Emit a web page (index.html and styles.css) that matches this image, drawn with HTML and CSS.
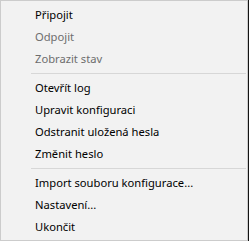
FILE: index.html
```html
<!DOCTYPE html>
<html lang="cs">
<head>
<meta charset="utf-8">
<link rel="stylesheet" href="styles.css">
</head>
<body>
<div class="menu">
  <div class="item">Připojit</div>
  <div class="item disabled">Odpojit</div>
  <div class="item disabled">Zobrazit stav</div>
  <div class="sep"></div>
  <div class="item">Otevřít log</div>
  <div class="item">Upravit konfiguraci</div>
  <div class="item">Odstranit uložená hesla</div>
  <div class="item">Změnit heslo</div>
  <div class="sep"></div>
  <div class="item">Import souboru konfigurace...</div>
  <div class="item">Nastavení...</div>
  <div class="item">Ukončit</div>
</div>
</body>
</html>
```
FILE: styles.css
```css
html, body {
  margin: 0;
  padding: 0;
}
body {
  background: #141414;
  width: 249px;
  height: 241px;
  overflow: hidden;
}
.menu {
  box-sizing: border-box;
  width: 248px;
  height: 241px;
  background: #f2f2f2;
  border: 1px solid #cccccc;
  padding: 3px 0 2px 0;
  font-family: "Noto Sans", "Open Sans", sans-serif;
  font-size: 11.2px;
  color: #000;
}
.item {
  height: 22px;
  line-height: 22px;
  padding-left: 34px;
  white-space: nowrap;
}
.disabled {
  color: #6d6d6d;
}
.sep {
  height: 7px;
  box-sizing: border-box;
  padding-top: 3px;
  margin: 0 1px 0 30px;
}
.sep::before {
  content: "";
  display: block;
  height: 1px;
  background: #d7d7d7;
}
```
